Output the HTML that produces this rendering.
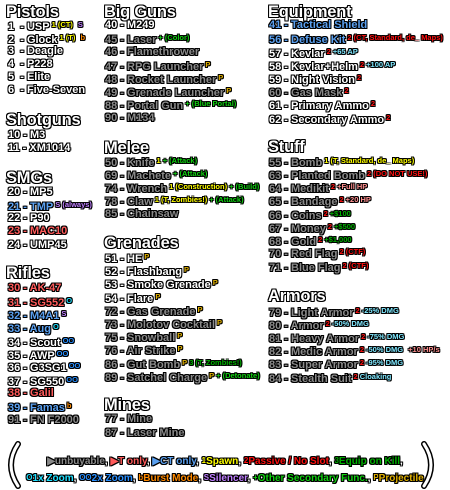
<!DOCTYPE html>
<html><head><meta charset="utf-8"><style>
body{margin:0;width:450px;height:490px;background:#fff;overflow:hidden;position:relative;font-family:"Liberation Sans",Arial,sans-serif;font-weight:bold}
.l{position:absolute;white-space:nowrap;font-size:11px;line-height:14px;height:14px;color:#fff;
text-shadow:1px 0 #000,-1px 0 #000,0 1px #000,0 -1px #000,1px 1px #000,-1px -1px #000,1px -1px #000,-1px 1px #000}
.h{font-size:16.5px;line-height:16px;height:16px;color:#fff;letter-spacing:-0.2px}
.g{color:#8a8a8a}.r{color:#ff5a5a}.b{color:#5aa0f0}
.s{font-size:7.5px;vertical-align:3px;margin-left:2px}
.y{color:#ffff00}.rd{color:#ff1010}.gr{color:#10d010}.cy{color:#20e0ff}.bl{color:#2a90ff}.or{color:#ff8a00}.pu{color:#c080ff}.pj{color:#e0b000}.lc{color:#80e8ff}.pk{color:#ff9090}.dg{color:#00b000}
.n{font-size:8px;vertical-align:1px}
.lg{font-size:10px;position:absolute;left:0;width:450px;text-align:center}
</style></head><body>
<!-- Column 1 -->
<div class="l h" style="left:6px;top:4px">Pistols</div>
<div class="l" style="left:8px;top:18px">1&nbsp;&nbsp;- USP<span class="s y">1 (CT)</span> <span class="s pu">S</span></div>
<div class="l" style="left:8px;top:31px">2&nbsp;&nbsp;- Glock<span class="s y">1 (T)</span> <span class="s or">b</span></div>
<div class="l" style="left:8px;top:44px">3&nbsp;&nbsp;- Deagle</div>
<div class="l" style="left:8px;top:57px">4&nbsp;&nbsp;- P228</div>
<div class="l" style="left:8px;top:70px">5&nbsp;&nbsp;- Elite</div>
<div class="l" style="left:8px;top:83px">6&nbsp;&nbsp;- Five-Seven</div>
<div class="l h" style="left:6px;top:112px">Shotguns</div>
<div class="l" style="left:8px;top:128px">10 - M3</div>
<div class="l" style="left:8px;top:141px">11 - XM1014</div>
<div class="l h" style="left:6px;top:170px">SMGs</div>
<div class="l" style="left:8px;top:185px">20 - MP5</div>
<div class="l b" style="left:8px;top:198px">21 - TMP<span class="s pu">S (always)</span></div>
<div class="l" style="left:8px;top:211px">22 - P90</div>
<div class="l r" style="left:8px;top:224px">23 - MAC10</div>
<div class="l" style="left:8px;top:238px">24 - UMP45</div>
<div class="l h" style="left:6px;top:265px">Rifles</div>
<div class="l r" style="left:8px;top:281px">30 - AK-47</div>
<div class="l r" style="left:8px;top:294px">31 - SG552<span class="s cy">O</span></div>
<div class="l b" style="left:8px;top:307px">32 - M4A1<span class="s pu">S</span></div>
<div class="l b" style="left:8px;top:320px">33 - Aug<span class="s cy">O</span></div>
<div class="l" style="left:8px;top:334px">34 - Scout<span class="s bl">OO</span></div>
<div class="l" style="left:8px;top:347px">35 - AWP<span class="s bl">OO</span></div>
<div class="l" style="left:8px;top:359px">36 - G3SG1<span class="s bl">OO</span></div>
<div class="l" style="left:8px;top:373px">37 - SG550<span class="s bl">OO</span></div>
<div class="l r" style="left:8px;top:386px">38 - Galil</div>
<div class="l b" style="left:8px;top:399px">39 - Famas<span class="s or">b</span></div>
<div class="l g" style="left:8px;top:413px">91 - FN F2000</div>
<!-- Column 2 -->
<div class="l h" style="left:104px;top:4px">Big Guns</div>
<div class="l" style="left:105px;top:18px">40 - M249</div>
<div class="l g" style="left:105px;top:31px">45 - Laser<span class="s gr">+ (Color)</span></div>
<div class="l g" style="left:105px;top:45px">46 - Flamethrower</div>
<div class="l g" style="left:105px;top:58px">47 - RPG Launcher<span class="s pj">P</span></div>
<div class="l g" style="left:105px;top:71px">48 - Rocket Launcher<span class="s pj">P</span></div>
<div class="l g" style="left:105px;top:84px">49 - Grenade Launcher<span class="s pj">P</span></div>
<div class="l g" style="left:105px;top:97px">88 - Portal Gun<span class="s gr">+ (Blue Portal)</span></div>
<div class="l g" style="left:105px;top:111px">90 - M134</div>
<div class="l h" style="left:104px;top:140px">Melee</div>
<div class="l g" style="left:105px;top:154px">50 - Knife<span class="s y">1</span><span class="s gr">+ (Attack)</span></div>
<div class="l g" style="left:105px;top:167px">69 - Machete<span class="s gr">+ (Attack)</span></div>
<div class="l g" style="left:105px;top:180px">74 - Wrench<span class="s y">1 (Construction)</span><span class="s gr">+ (Build)</span></div>
<div class="l g" style="left:105px;top:193px">78 - Claw<span class="s y">1 (T, Zombies!)</span><span class="s gr">+ (Attack)</span></div>
<div class="l g" style="left:105px;top:207px">85 - Chainsaw</div>
<div class="l h" style="left:104px;top:235px">Grenades</div>
<div class="l" style="left:105px;top:250px">51 - HE<span class="s pj">P</span></div>
<div class="l" style="left:105px;top:263px">52 - Flashbang<span class="s pj">P</span></div>
<div class="l" style="left:105px;top:276px">53 - Smoke Grenade<span class="s pj">P</span></div>
<div class="l" style="left:105px;top:290px">54 - Flare<span class="s pj">P</span></div>
<div class="l g" style="left:105px;top:303px">72 - Gas Grenade<span class="s pj">P</span></div>
<div class="l g" style="left:105px;top:316px">73 - Molotov Cocktail<span class="s pj">P</span></div>
<div class="l g" style="left:105px;top:329px">75 - Snowball<span class="s pj">P</span></div>
<div class="l g" style="left:105px;top:342px">76 - Air Strike<span class="s pj">P</span></div>
<div class="l g" style="left:105px;top:356px">86 - Gut Bomb<span class="s pj">P</span><span class="s dg">3 (T, Zombies!)</span></div>
<div class="l g" style="left:105px;top:369px">89 - Satchel Charge<span class="s pj">P</span><span class="s gr">+ (Detonate)</span></div>
<div class="l h" style="left:104px;top:397px">Mines</div>
<div class="l g" style="left:105px;top:412px">77 - Mine</div>
<div class="l g" style="left:105px;top:426px">87 - Laser Mine</div>
<!-- Column 3 -->
<div class="l h" style="left:268px;top:4px">Equipment</div>
<div class="l b" style="left:269px;top:18px">41 - Tactical Shield</div>
<div class="l b" style="left:269px;top:31px">56 - Defuse Kit<span class="s rd">2 (CT, Standard, de_ Maps)</span></div>
<div class="l" style="left:269px;top:45px">57 - Kevlar<span class="s rd">2</span><span class="s lc">+65 AP</span></div>
<div class="l" style="left:269px;top:58px">58 - Kevlar+Helm<span class="s rd">2</span><span class="s lc">+100 AP</span></div>
<div class="l" style="left:269px;top:71px">59 - Night Vision<span class="s rd">2</span></div>
<div class="l g" style="left:269px;top:84px">60 - Gas Mask<span class="s rd">2</span></div>
<div class="l" style="left:269px;top:97px">61 - Primary Ammo<span class="s rd">2</span></div>
<div class="l" style="left:269px;top:111px">62 - Secondary Ammo<span class="s rd">2</span></div>
<div class="l h" style="left:268px;top:139px">Stuff</div>
<div class="l g" style="left:269px;top:154px">55 - Bomb<span class="s y">1 (T, Standard, de_ Maps)</span></div>
<div class="l g" style="left:269px;top:167px">63 - Planted Bomb<span class="s rd">2 (DO NOT USE!)</span></div>
<div class="l g" style="left:269px;top:180px">64 - Medikit<span class="s rd">2</span><span class="s pk">+Full HP</span></div>
<div class="l g" style="left:269px;top:193px">65 - Bandage<span class="s rd">2</span><span class="s pk">+20 HP</span></div>
<div class="l g" style="left:269px;top:207px">66 - Coins<span class="s rd">2</span><span class="s dg">+$100</span></div>
<div class="l g" style="left:269px;top:220px">67 - Money<span class="s rd">2</span><span class="s dg">+$500</span></div>
<div class="l g" style="left:269px;top:233px">68 - Gold<span class="s rd">2</span><span class="s dg">+$1,000</span></div>
<div class="l g" style="left:269px;top:245px">70 - Red Flag<span class="s rd">2 (CTF)</span></div>
<div class="l g" style="left:269px;top:259px">71 - Blue Flag<span class="s rd">2 (CTF)</span></div>
<div class="l h" style="left:268px;top:288px">Armors</div>
<div class="l g" style="left:269px;top:304px">79 - Light Armor<span class="s rd">2</span><span class="s lc">-25% DMG</span></div>
<div class="l g" style="left:269px;top:317px">80 - Armor<span class="s rd">2</span><span class="s lc">-50% DMG</span></div>
<div class="l g" style="left:269px;top:330px">81 - Heavy Armor<span class="s rd">2</span><span class="s lc">-75% DMG</span></div>
<div class="l g" style="left:269px;top:343px">82 - Medic Armor<span class="s rd">2</span><span class="s lc">-50% DMG</span> <span class="s pk">+10 HP/s</span></div>
<div class="l g" style="left:269px;top:356px">83 - Super Armor<span class="s rd">2</span><span class="s lc">-95% DMG</span></div>
<div class="l g" style="left:269px;top:370px">84 - Stealth Suit<span class="s rd">2</span><span class="s lc">Cloaking</span></div>
<!-- Legend -->
<svg style="position:absolute;left:0;top:440px" width="450" height="50">
<path d="M18 4 Q4 25 18 46" fill="none" stroke="#000" stroke-width="6" stroke-linecap="round"/>
<path d="M18 4 Q4 25 18 46" fill="none" stroke="#fff" stroke-width="3" stroke-linecap="round"/>
<path d="M424 4 Q438 25 424 46" fill="none" stroke="#000" stroke-width="6" stroke-linecap="round"/>
<path d="M424 4 Q438 25 424 46" fill="none" stroke="#fff" stroke-width="3" stroke-linecap="round"/>
</svg>
<div class="l lg" style="top:454px"><span class="g">▶unbuyable</span>, <span class="r">▶T only</span>, <span class="b">▶CT only</span>, <span class="y"><span class="n">1</span>Spawn</span>, <span class="rd"><span class="n">2</span>Passive / No Slot</span>, <span class="dg"><span class="n">3</span>Equip on Kill</span>,</div>
<div class="l lg" style="top:471px"><span class="cy"><span class="n">O</span>1x Zoom</span>, <span class="bl"><span class="n">OO</span>2x Zoom</span>, <span class="or"><span class="n">b</span>Burst Mode</span>, <span class="pu"><span class="n">S</span>Silencer</span>, <span class="gr"><span class="n">+</span>Other Secondary Func.</span>, <span class="pj"><span class="n">P</span>Projectile</span></div>
</body></html>
